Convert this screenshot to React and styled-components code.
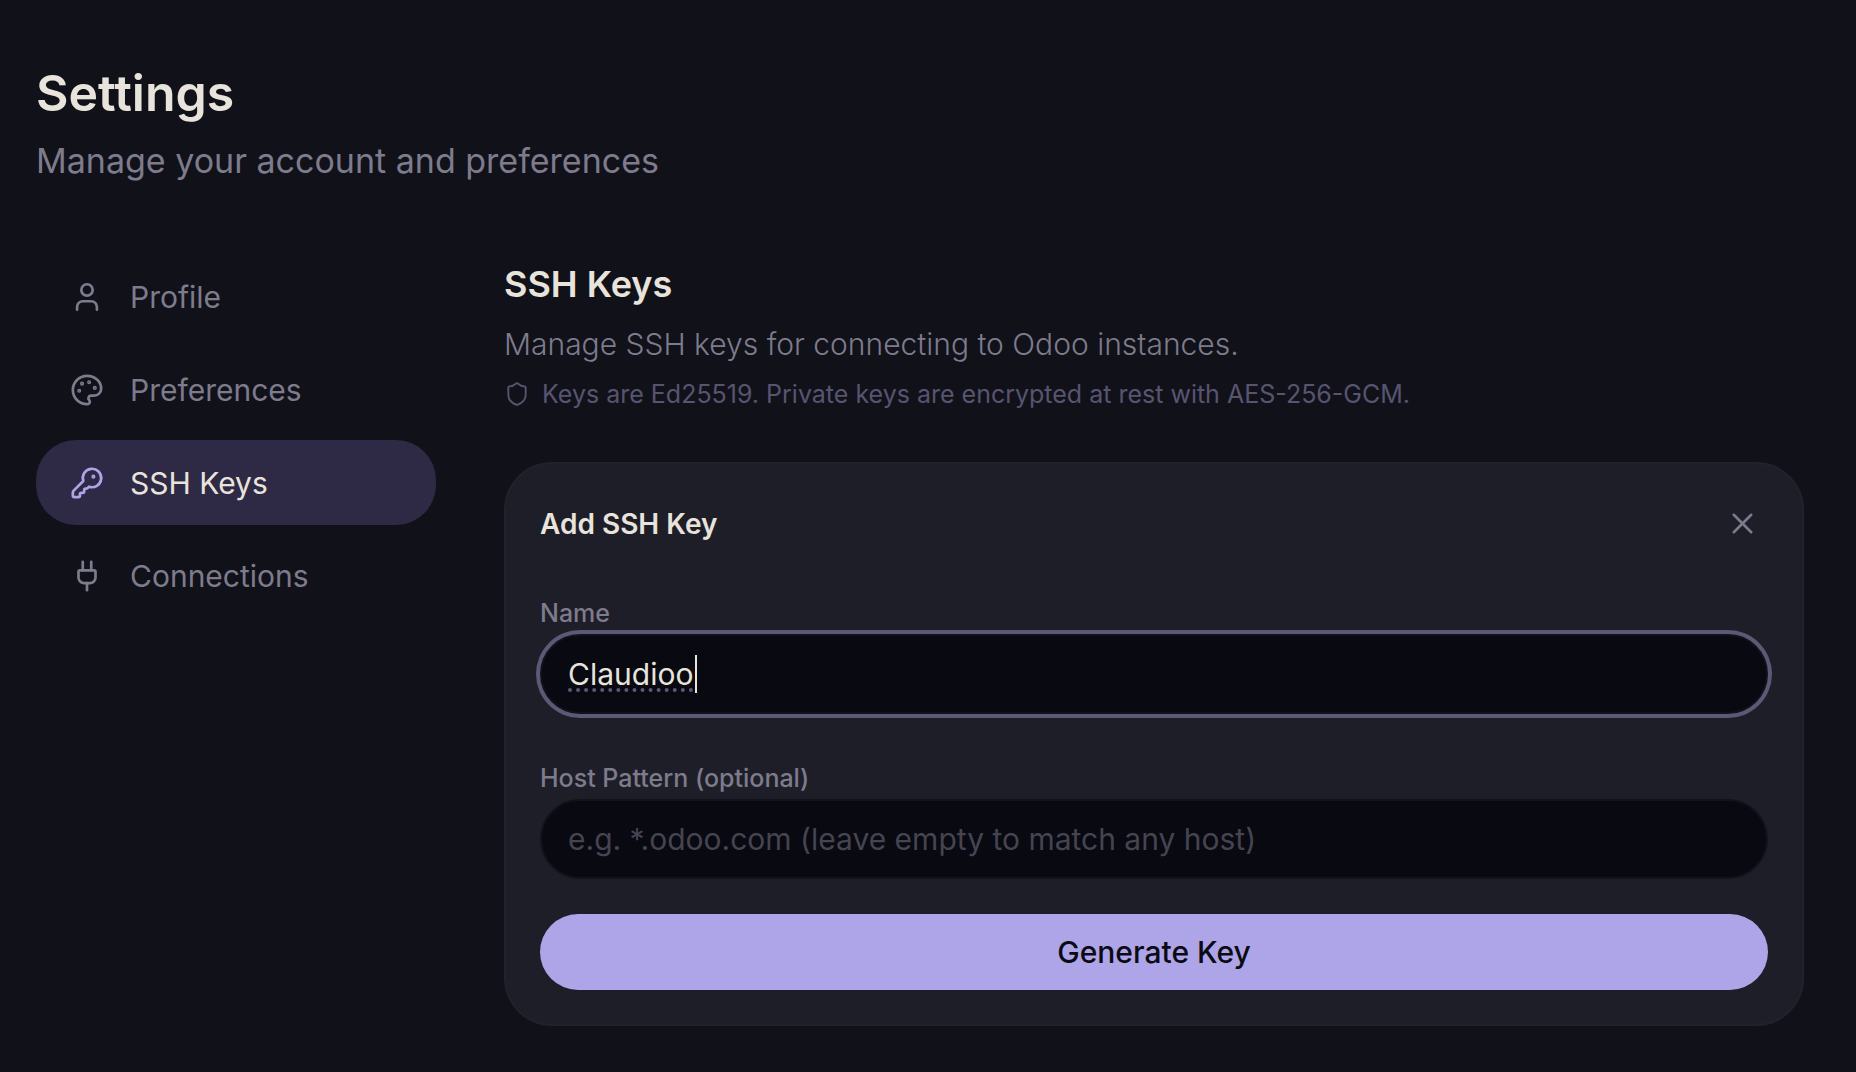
import React, { useState } from 'react';
import styled, { createGlobalStyle } from 'styled-components';
import { KeyRound, Palette, Plug, Shield, X } from 'lucide-react';

const color = {
  page: '#11111a',
  card: '#1e1e29',
  cardEdge: '#22222d',
  field: '#090912',
  fieldEdge: '#12121c',
  ring: '#5c5876',
  text: '#e8e4dc',
  muted: '#7e7b8c',
  dim: '#585470',
  placeholder: '#454450',
  accent: '#aea4e8',
  active: '#2e2945',
};

const GlobalStyle = createGlobalStyle`
  *, *::before, *::after { box-sizing: border-box; }
  body {
    margin: 0;
    background: ${color.page};
    color: ${color.text};
    font-family: Inter, "Liberation Sans", sans-serif;
  }
  h1, h2, h3, p { margin: 0; }
  button, input { font-family: inherit; }
`;

const Page = styled.div`
  min-height: 100vh;
  padding: 61px 52px 46px 36px;
`;

const PageHeader = styled.header`
  display: flex;
  flex-direction: column;
  gap: 14px;
  margin-bottom: 71px;
`;

const PageTitle = styled.h1`
  font-size: 50px;
  line-height: 64px;
  font-weight: 600;
`;

const PageSubtitle = styled.p`
  font-size: 34px;
  line-height: 44px;
  font-weight: 400;
  color: ${color.muted};
`;

const Columns = styled.div`
  display: grid;
  grid-template-columns: 400px minmax(0, 1fr);
  gap: 68px;
  align-items: start;
`;

const Nav = styled.nav`
  display: flex;
  flex-direction: column;
  gap: 8px;
`;

const NavItem = styled.button`
  display: flex;
  align-items: center;
  gap: 26px;
  height: 85px;
  padding: 0 34px;
  border: 0;
  border-radius: 40px;
  background: ${(p) => (p.$active ? color.active : 'transparent')};
  color: ${(p) => (p.$active ? color.text : color.muted)};
  font-size: 30px;
  font-weight: 400;
  text-align: left;
  cursor: pointer;

  svg {
    flex: none;
    color: ${(p) => (p.$active ? color.accent : 'inherit')};
  }
`;

const Section = styled.main`
  display: flex;
  flex-direction: column;
`;

const SectionTitle = styled.h2`
  font-size: 36px;
  line-height: 60px;
  font-weight: 600;
`;

const SectionText = styled.p`
  font-size: 30px;
  line-height: 60px;
  font-weight: 300;
  color: ${color.muted};
`;

const SecurityNote = styled.p`
  display: flex;
  align-items: center;
  gap: 12px;
  font-size: 25px;
  line-height: 40px;
  font-weight: 400;
  color: ${color.dim};

  svg { flex: none; }
`;

const Card = styled.form`
  display: flex;
  flex-direction: column;
  margin-top: 48px;
  padding: 34px;
  border: 2px solid ${color.cardEdge};
  border-radius: 48px;
  background: ${color.card};
`;

const CardHeader = styled.div`
  display: flex;
  align-items: center;
  justify-content: space-between;
`;

const CardTitle = styled.h3`
  font-size: 28px;
  line-height: 40px;
  font-weight: 600;
`;

const CloseButton = styled.button`
  display: flex;
  padding: 8px;
  border: 0;
  border-radius: 50%;
  background: none;
  color: ${color.muted};
  cursor: pointer;
`;

const Field = styled.div`
  display: flex;
  flex-direction: column;
  gap: 5px;
  margin-top: 48px;
`;

const Label = styled.label`
  font-size: 25px;
  line-height: 32px;
  font-weight: 500;
  color: ${color.muted};
`;

const Control = styled.div`
  position: relative;
  display: flex;
`;

const TextInput = styled.input`
  width: 100%;
  height: 80px;
  padding: 0 26px;
  border: 2px solid ${color.fieldEdge};
  border-radius: 40px;
  outline: none;
  background: ${color.field};
  color: ${color.text};
  caret-color: transparent;
  font-size: 30px;
  font-weight: 400;

  &:focus { box-shadow: 0 0 0 4px ${color.ring}; }
  &::placeholder { color: ${color.placeholder}; opacity: 1; }
`;

const SpelledInput = styled(TextInput)`
  text-decoration: underline dotted 4px ${color.ring};
  text-underline-offset: 3px;
  text-decoration-skip-ink: none;
`;

const Caret = styled.span`
  position: absolute;
  top: 21px;
  left: 155px;
  width: 2px;
  height: 38px;
  background: ${color.text};
`;

const SubmitButton = styled.button`
  height: 76px;
  margin-top: 35px;
  border: 0;
  border-radius: 38px;
  background: ${color.accent};
  color: #0b0b14;
  font-size: 30px;
  font-weight: 500;
  cursor: pointer;
`;

function UserIcon({ size, strokeWidth }) {
  return (
    <svg
      width={size}
      height={size}
      viewBox="0 0 24 24"
      fill="none"
      stroke="currentColor"
      strokeWidth={strokeWidth}
      strokeLinecap="round"
      strokeLinejoin="round"
      aria-hidden="true"
    >
      <path d="M19 21v-2a4 4 0 0 0-4-4H9a4 4 0 0 0-4 4v2" />
      <circle cx="12" cy="7" r="4" />
    </svg>
  );
}

const sections = [
  { name: 'Profile', Icon: UserIcon },
  { name: 'Preferences', Icon: Palette },
  { name: 'SSH Keys', Icon: KeyRound },
  { name: 'Connections', Icon: Plug },
];

export default function App() {
  const [name, setName] = useState('Claudioo');
  const [host, setHost] = useState('');
  const [active, setActive] = useState('SSH Keys');

  return (
    <>
      <GlobalStyle />
      <Page>
        <PageHeader>
          <PageTitle>Settings</PageTitle>
          <PageSubtitle>Manage your account and preferences</PageSubtitle>
        </PageHeader>
        <Columns>
          <Nav aria-label="Settings">
            {sections.map(({ name: label, Icon }) => (
              <NavItem key={label} type="button" $active={label === active} onClick={() => setActive(label)}>
                <Icon size={34} strokeWidth={1.9} />
                {label}
              </NavItem>
            ))}
          </Nav>
          <Section>
            <SectionTitle>SSH Keys</SectionTitle>
            <SectionText>Manage SSH keys for connecting to Odoo instances.</SectionText>
            <SecurityNote>
              <Shield size={26} strokeWidth={1.75} />
              Keys are Ed25519. Private keys are encrypted at rest with AES-256-GCM.
            </SecurityNote>
            <Card onSubmit={(e) => e.preventDefault()}>
              <CardHeader>
                <CardTitle>Add SSH Key</CardTitle>
                <CloseButton type="button" aria-label="Close">
                  <X size={35} strokeWidth={1.75} />
                </CloseButton>
              </CardHeader>
              <Field>
                <Label htmlFor="key-name">Name</Label>
                <Control>
                  <SpelledInput
                    id="key-name"
                    autoFocus
                    spellCheck={false}
                    value={name}
                    onChange={(e) => setName(e.target.value)}
                  />
                  <Caret />
                </Control>
              </Field>
              <Field>
                <Label htmlFor="key-host">Host Pattern (optional)</Label>
                <TextInput
                  id="key-host"
                  placeholder="e.g. *.odoo.com (leave empty to match any host)"
                  value={host}
                  onChange={(e) => setHost(e.target.value)}
                />
              </Field>
              <SubmitButton type="submit">Generate Key</SubmitButton>
            </Card>
          </Section>
        </Columns>
      </Page>
    </>
  );
}
